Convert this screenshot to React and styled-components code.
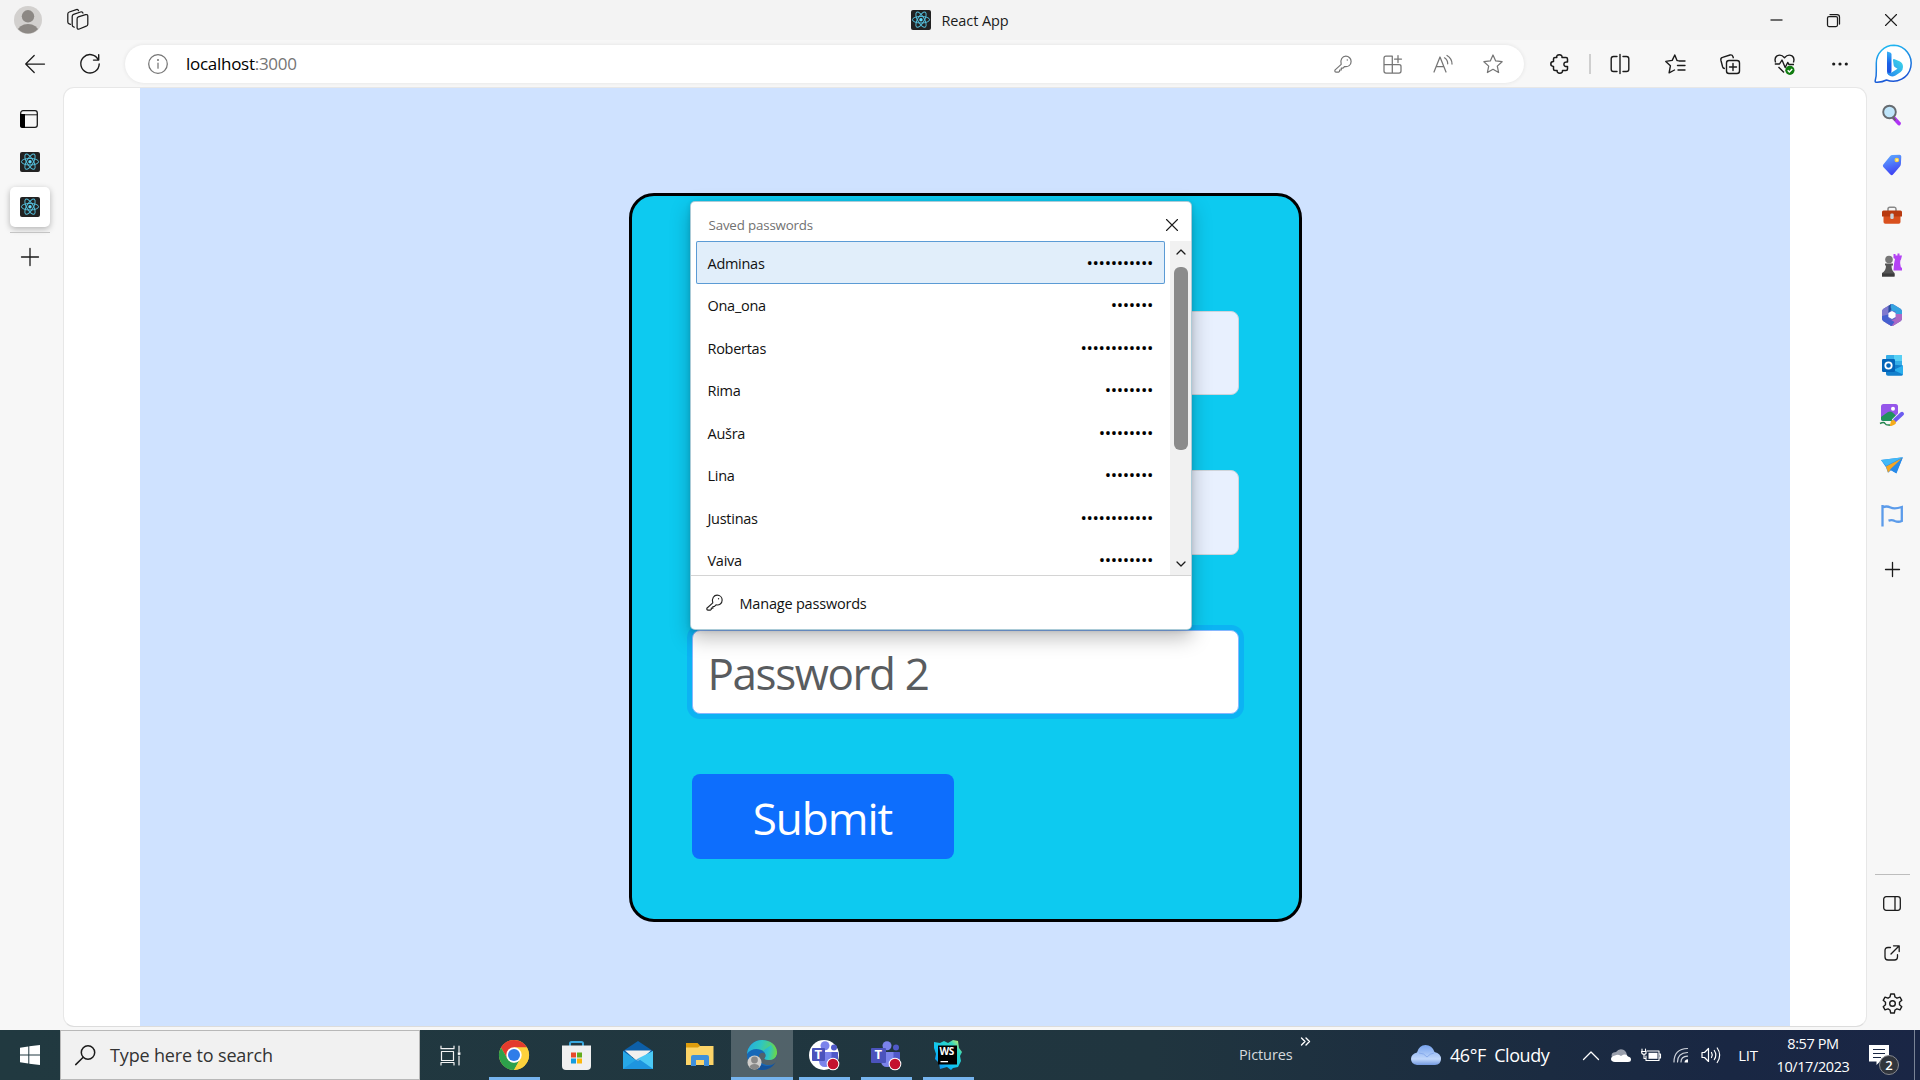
import React from "react";
import styled, { createGlobalStyle } from "styled-components";

const GlobalStyle = createGlobalStyle`
  * { box-sizing: border-box; }
  body { margin: 0; overflow: hidden; font-family: "Open Sans", "Noto Sans", sans-serif; color: #1b1b1b; }
  svg { display: block; flex: none; overflow: visible; }
`;

/* ---------- shared ---------- */
const Screen = styled.div`
  width: 1920px;
  height: 1080px;
  display: flex;
  flex-direction: column;
  background: #f7f7f7;
`;
const Text = styled.span`
  padding-top: ${(p) => (p.$drop === undefined ? 1 : p.$drop)}px;
  font-size: ${(p) => p.$size}px;
  letter-spacing: ${(p) => p.$track || 0}px;
  color: ${(p) => p.$color || "inherit"};
  line-height: 1.2;
  white-space: pre;
`;
const Slot = styled.div`
  flex: none;
  width: ${(p) => p.$w}px;
  height: ${(p) => (p.$h ? p.$h + "px" : "100%")};
  padding-right: ${(p) => p.$pr || 0}px;
  padding-bottom: ${(p) => p.$pb || 0}px;
  display: flex;
  align-items: center;
  justify-content: center;
`;

/* ---------- browser frame ---------- */
const TitleBar = styled.header`
  height: 40px;
  flex: none;
  display: flex;
  align-items: center;
  justify-content: space-between;
  background: #f3f3f3;
`;
const TitleSide = styled.div`
  width: 180px;
  height: 100%;
  display: flex;
  justify-content: ${(p) => (p.$end ? "flex-end" : "flex-start")};
`;
const PageTitle = styled.div`
  display: flex;
  align-items: center;
  gap: 10px;
`;
const Toolbar = styled.nav`
  height: 47px;
  flex: none;
  display: flex;
  align-items: center;
  padding-left: 10px;
`;
const AddressBar = styled.div`
  width: 1399px;
  height: 38px;
  margin: 1px 8px 0 5px;
  flex: none;
  display: flex;
  align-items: center;
  padding: 0 6.5px 0 8px;
  border-radius: 19px;
  background: #fff;
  box-shadow: 0 0 4px rgba(0, 0, 0, 0.09);
`;
const Url = styled.div`
  flex: 1;
  display: flex;
  padding-left: 3px;
`;
const Separator = styled.div`
  width: 2px;
  height: 20px;
  margin: 0 1px 0 2px;
  background: #cfcfcf;
`;
const Body = styled.div`
  flex: 1;
  min-height: 0;
  display: flex;
`;
const TabRail = styled.aside`
  width: 63px;
  flex: none;
  display: flex;
  flex-direction: column;
  padding: 10px 0 0 10px;
`;
const Tab = styled.div`
  width: 40px;
  height: 40px;
  padding-right: ${(p) => p.$pr || 0}px;
  display: flex;
  align-items: center;
  justify-content: center;
  border-radius: 5px;
  margin-top: ${(p) => p.$mt || 0}px;
  background: ${(p) => (p.$active ? "#fff" : "transparent")};
  box-shadow: ${(p) => (p.$active ? "0 2px 6px rgba(0,0,0,.28)" : "none")};
`;
const RailLine = styled.div`
  width: 40px;
  height: 1px;
  margin-top: 5px;
  background: #c4c4c4;
`;
const Viewport = styled.main`
  width: 1804px;
  height: 940px;
  flex: none;
  padding: 0 76px;
  border: 1px solid #e7e7e7;
  border-bottom-color: #dcdcdc;
  border-radius: 11px;
  background: #fff;
`;
const Stage = styled.div`
  width: 1650px;
  height: 938px;
  background: #cfe2ff;
  display: flex;
  justify-content: center;
  align-items: flex-start;
  padding-top: 105px;
`;
const SideRail = styled.aside`
  flex: 1;
  display: flex;
  flex-direction: column;
  align-items: center;
  padding-right: 3px;
`;
const RailRule = styled.div`
  width: 35px;
  height: 1px;
  margin: 276px 0 3px;
  flex: none;
  background: #bdbdbd;
`;

/* ---------- form ---------- */
const Card = styled.div`
  position: relative;
  width: 673px;
  height: 729px;
  padding: 115px 60px 0 60px;
  border: 3px solid #000;
  border-radius: 25px;
  background: #0dcaf0;
  display: flex;
  flex-direction: column;
`;
const Field = styled.div`
  height: ${(p) => p.$h || 84}px;
  flex: none;
  margin-bottom: ${(p) => p.$gap}px;
  padding: 0 15px;
  display: flex;
  align-items: center;
  border-radius: 8px;
  border: 1px solid ${(p) => (p.$focus ? "#86b7fe" : "#ced4da")};
  background: ${(p) => (p.$focus ? "#fff" : "#e8f0fe")};
  box-shadow: ${(p) => (p.$focus ? "0 0 0 5px rgba(13,110,253,.25)" : "none")};
`;
const Submit = styled.div`
  width: 262px;
  height: 85px;
  display: flex;
  align-items: center;
  justify-content: center;
  border-radius: 8px;
  background: #0d6efd;
  color: #fff;
`;

/* ---------- saved password popup ---------- */
const Popup = styled.div`
  position: absolute;
  left: 58px;
  top: 5px;
  width: 502px;
  height: 429px;
  display: flex;
  flex-direction: column;
  border: 1px solid rgba(150, 190, 205, 0.8);
  border-radius: 5px;
  background: #fff;
  box-shadow: 0 8px 20px rgba(0, 0, 0, 0.26), 0 1px 5px rgba(0, 0, 0, 0.12);
`;
const PopupHead = styled.div`
  height: 39px;
  flex: none;
  padding: 7px 13px 0 18px;
  display: flex;
  align-items: center;
  justify-content: space-between;
`;
const PopupBody = styled.div`
  height: 335px;
  flex: none;
  display: flex;
  justify-content: space-between;
  overflow: hidden;
  border-bottom: 1px solid #d4d4d4;
`;
const List = styled.div`
  padding-left: 5px;
`;
const Row = styled.div`
  width: 469px;
  height: 42.5px;
  padding: 0 11.5px 0 12px;
  display: flex;
  align-items: center;
  justify-content: space-between;
  border-radius: 2px;
  background: ${(p) => (p.$on ? "#e1eefa" : "transparent")};
  box-shadow: ${(p) => (p.$on ? "inset 0 0 0 1px #5b9bd5" : "none")};
`;
const ScrollBar = styled.div`
  width: 21px;
  padding-left: 1px;
  display: flex;
  flex-direction: column;
  align-items: center;
  background: #f1f1f1;
`;
const Thumb = styled.div`
  width: 14px;
  height: 183px;
  margin-bottom: 105px;
  flex: none;
  border-radius: 6px;
  background: #8b8b8b;
`;
const Manage = styled.div`
  flex: 1;
  display: flex;
  align-items: center;
  gap: 17px;
  padding: 0 0 0 15px;
`;

/* ---------- taskbar ---------- */
const TaskBar = styled.footer`
  height: 50px;
  flex: none;
  display: flex;
  color: #fff;
  background: linear-gradient(90deg, #213940 0%, #20353f 60%, #1c2d40 76%, #192743 90%, #1a2645 100%);
`;
const SearchBox = styled.div`
  width: 360px;
  display: flex;
  align-items: center;
  gap: 15px;
  padding-left: 14px;
  border: 1px solid #b8b8b8;
  background: #f1f1f1;
  color: #333;
`;
const TaskApp = styled.div`
  width: 62px;
  height: 50px;
  flex: none;
  display: flex;
  flex-direction: column;
  align-items: center;
  padding-top: 10px;
  gap: 7px;
  background: ${(p) => (p.$active ? "rgba(255,255,255,.22)" : "transparent")};
`;
const Indicator = styled.div`
  width: ${(p) => (p.$active ? 62 : 51)}px;
  height: 3px;
  background: ${(p) => (p.$show ? "#76b4ee" : "transparent")};
`;
const Pictures = styled.div`
  margin-left: auto;
  width: 80px;
  display: flex;
  gap: 8px;
  padding-top: 15px;
`;
const Weather = styled.div`
  width: 152px;
  margin: 0 14px 0 92px;
  display: flex;
  align-items: center;
  gap: 9px;
`;
const Language = styled.div`
  width: 46px;
  margin-right: 3px;
  display: flex;
  align-items: center;
  justify-content: center;
`;
const Clock = styled.div`
  width: 78px;
  display: flex;
  flex-direction: column;
  align-items: center;
  justify-content: center;
  gap: 5px;
`;
const ShowDesktop = styled.div`
  width: 6px;
  border-left: 1px solid #7a8496;
`;

/* ---------- line icons ---------- */
const Line = ({ w = 20, h, c = "#1b1b1b", s = 1.25, children }) => (
  <svg width={w} height={h || w} viewBox={`0 0 ${w} ${h || w}`} fill="none" stroke={c} strokeWidth={s} strokeLinecap="round" strokeLinejoin="round">
    {children}
  </svg>
);
const GREY = "#757575";

const ReactLogo = () => (
  <svg width="20" height="20" viewBox="0 0 20 20">
    <rect width="20" height="20" rx="2" fill="#222" />
    <g fill="none" stroke="#53bcd8" strokeWidth="1">
      <ellipse cx="10" cy="9.7" rx="8.6" ry="3.3" />
      <ellipse cx="10" cy="9.7" rx="8.6" ry="3.3" transform="rotate(60 10 9.7)" />
      <ellipse cx="10" cy="9.7" rx="8.6" ry="3.3" transform="rotate(120 10 9.7)" />
    </g>
    <circle cx="10" cy="9.7" r="1.7" fill="#61dafb" />
  </svg>
);
const Profile = () => (
  <svg width="28" height="28" viewBox="0 0 28 28">
    <clipPath id="pf"><circle cx="14" cy="14" r="13.5" /></clipPath>
    <circle cx="14" cy="14" r="14" fill="#d2d0ce" />
    <g fill="#8c8884" clipPath="url(#pf)"><circle cx="14" cy="10.3" r="6.2" /><ellipse cx="14" cy="25.5" rx="10.5" ry="7.5" /></g>
  </svg>
);
const Workspaces = () => (
  <Line w={22}>
    <path d="M11.300 7.900l7.300-2.300q2.200-.5 2.200 1.600v8q0 1.500-1.500 2l-7 2.800q-2.200.7-2.200-1.600V9.900q0-1.500 1.200-2z" />
    <path d="M7.300 18.200l-.8-.4q-1.300-.5-1.300-1.900V7.400q0-1.500 1.400-2L13.500 3q2-.5 2.400 1.200" />
    <path d="M3.400 15.400l-1.200-.6Q.8 14.300.8 12.900V5q0-1.500 1.500-2L9.300.6q1.700-.5 2.200 1.100" />
  </Line>
);
const Back = () => <Line><path d="M19.500 10H.7M9.200 1.500L.7 10l8.500 8.500" /></Line>;
const Refresh = () => <Line s={1.4}><path d="M18.300 5.800A9.200 9.200 0 1 0 19.200 10M18.700.8v5.300h-5.200" /></Line>;
const Info = () => (
  <Line c={GREY}><circle cx="10" cy="10" r="9.300" /><path d="M10 9v5.200" /><circle cx="10" cy="6" r=".4" fill={GREY} /></Line>
);
const Key = ({ c = GREY, w = 18 }) => (
  <svg width={w} height={w} viewBox="0 0 18 18" fill="none" stroke={c} strokeWidth="1.200" strokeLinejoin="round">
    <path d="M7.200 9.400C5.800 4.500 8.500 1.200 11.800 1.200c3 0 5.300 2.300 5.300 5.200 0 3.800-3 5.800-6.500 5.100L9 13.200H7.300v1.800H5.600v1.300l-.9.800H2q-1.100 0-1.100-1.100v-.9z" />
    <circle cx="13.300" cy="5" r=".7" fill={c} stroke="none" />
  </svg>
);
const AppsPlus = () => (
  <Line w={19} c={GREY}><path d="M9.300 1.200H3q-2 0-2 2V16q0 2 2 2h13q2 0 2-2v-4.500q0-1.800-2-1.800H1M9.300 1.200V18M15 .5v7M11.500 4h7" /></Line>
);
const ReadAloud = () => (
  <Line c={GREY} h={18}><path d="M1 17L7 2l6 15M3.300 11.500h7.500M11.500 2.800q3.200 2 3.200 6M14 .5q5 3 5 8.500" /></Line>
);
const Star = () => (
  <Line c={GREY}><path d="M10 1l2.700 5.900 6.400.8-4.800 4.400 1.300 6.400L10 15.300l-5.600 3.200 1.300-6.400L.9 7.700l6.400-.8z" /></Line>
);
const Puzzle = () => (
  <Line s={1.500}><path d="M6.800 3.500q-.6-2.700 2.500-2.700t2.700 2.700h4q1.500 0 1.500 1.500v3q-3.600-.4-3.600 2.200t3.600 2.200V15q0 1.500-1.500 1.500h-3.500q.2 2.800-2.700 2.800t-2.700-2.800H5q-1.500 0-1.500-1.500v-2.600Q.8 12.400.8 9.900t2.700-2.500V5q0-1.500 1.500-1.500z" /></Line>
);
const Split = () => <Line s={1.400}><path d="M7 2.500H3.500Q1.200 2.500 1.200 4.800v10.400q0 2.300 2.300 2.300H7M13 2.500h3.500q2.300 0 2.300 2.300v10.400q0 2.300-2.300 2.300H13M10 .5v19" /></Line>;
const Favorites = () => (
  <Line s={1.400}><path d="M13 6.600L12 6.500 9.800 1 7.200 6.400.8 7.400l4.600 4.400-1.300 7L9.500 16M14 7h6M12.500 11.500H20M13 16h7" /></Line>
);
const Collections = () => (
  <Line s={1.400}><rect x="6.500" y="6.500" width="13" height="13" rx="2.500" /><path d="M13 9.500v7M9.500 13h7M4.300 14.500Q3 14 2.600 12.700L.9 6.200Q.4 4 2.500 3.400L10 1q2.300-.5 3 1.700l.3 1" /></Line>
);
const Health = () => (
  <svg width="21" height="20" viewBox="0 0 21 20" fill="none" stroke="#1b1b1b" strokeWidth="1.400" strokeLinejoin="round">
    <path d="M1.600 8.500Q0 4 3 1.900 7-.3 10.500 3.700 14-.3 18 1.900q3 2.100 1.400 6.600M.8 10h4.700L8 6l3.200 7.500 2.500-5L15 10.500h5M4.500 13l5.500 5.500" />
    <circle cx="15.900" cy="16.300" r="4.600" fill="#107c10" stroke="none" /><path d="M13.700 16.300l1.700 1.700 2.800-3" stroke="#fff" />
  </svg>
);
const Dots = () => <svg width="16" height="4" viewBox="0 0 16 4" fill="#1b1b1b"><circle cx="1.700" cy="2" r="1.600" /><circle cx="8" cy="2" r="1.600" /><circle cx="14.300" cy="2" r="1.600" /></svg>;
const Bing = () => (
  <svg width="39" height="39" viewBox="0 0 39 39">
    <defs>
      <linearGradient id="bo" x1="0" y1="0" x2=".3" y2="1"><stop stopColor="#20c3f4" /><stop offset="1" stopColor="#1a56d6" /></linearGradient>
      <linearGradient id="bs" x1="0" y1="0" x2="0" y2="1"><stop stopColor="#38b5f7" /><stop offset=".5" stopColor="#1a62e8" /><stop offset="1" stopColor="#1f4fdc" /></linearGradient>
      <linearGradient id="bb" x1="1" y1="0" x2="0" y2="1"><stop stopColor="#3fdbe8" /><stop offset="1" stopColor="#2484f0" /></linearGradient>
    </defs>
    <path d="M20 1.300A18 18 0 1 1 12.500 36Q8 38.500 2 38.200 1 38.200 1.200 36.800 2.500 32 2.300 27V19A17.700 17.700 0 0 1 20 1.300z" fill="#fff" stroke="url(#bo)" strokeWidth="1.500" />
    <path d="M13 7.500l3.200 1.100q1.300.5 1.300 2v16.500l-1 3.800q-3.500-.5-3.500-4z" fill="url(#bs)" />
    <path d="M20 15l5.500 2.300q3.500 1.700 3.500 5.700 0 3-2.300 5l-5.200 3.500q-4 2-7-.5-1.500-1.500-1.500-3 2 2 5 .3l5.500-3.500-2-1.300q-1.300-.7-1.800-2L19 16.500q-.4-1.600 1-1.500z" fill="url(#bb)" />
  </svg>
);
const TabPane = () => (
  <svg width="18" height="18" viewBox="0 0 18 18"><rect x=".7" y=".7" width="16.600" height="16.600" rx="2.300" fill="none" stroke="#1b1b1b" strokeWidth="1.300" /><path d="M1 4.800h16.500" stroke="#1b1b1b" /><path d="M0 4h5v14H2.500Q0 18 0 15.500z" /></svg>
);
const Plus = ({ w = 18 }) => <Line w={w} s={1.300}><path d={`M${w / 2} .5V${w - 0.5}M.5 ${w / 2}H${w - 0.5}`} /></Line>;
const Close = ({ w = 11 }) => <Line w={w} s={1.100}><path d={`M.5 .5L${w - 0.5} ${w - 0.5}M${w - 0.5} .5L.5 ${w - 0.5}`} /></Line>;
const Min = () => <Line w={13} h={1}><path d="M.5 0h12" strokeLinecap="butt" /></Line>;
const Restore = () => <Line w={13}><rect x=".5" y="2.500" width="10" height="10" rx="1.500" /><path d="M3 .5h7q2.500 0 2.500 2.500v7" /></Line>;

/* ---------- sidebar colour icons ---------- */
const SearchColor = () => (
  <svg width="20" height="22" viewBox="0 0 20 22"><path d="M12 14l5 5.500" stroke="#b033f5" strokeWidth="3.800" strokeLinecap="round" /><path d="M10.500 13l3 3.300" stroke="#666" strokeWidth="2" /><circle cx="7.500" cy="8" r="6.300" fill="#bfe5fa" stroke="#666b70" strokeWidth="1.900" /></svg>
);
const TagColor = () => (
  <svg width="20" height="22" viewBox="0 0 20 22"><defs><linearGradient id="tg" x1=".3" y1="0" x2=".6" y2="1"><stop stopColor="#5ea9ff" /><stop offset="1" stopColor="#3d3cf3" /></linearGradient></defs><path d="M10.500 1l7-.3q1.700 0 1.800 1.700l-.4 7.600q-.1 1.500-1.200 2.700l-6.700 7.800q-1.300 1.300-2.600 0L1.300 13q-1-1.300 0-2.600l6.500-8Q9 1 10.500 1z" fill="url(#tg)" /><circle cx="14.800" cy="6" r="2.300" fill="#f7d54a" /><circle cx="15" cy="6" r="1" fill="#fff3b0" /></svg>
);
const ToolboxColor = () => (
  <svg width="20" height="18" viewBox="0 0 20 18"><path d="M6 5V3q0-1.800 1.800-1.800h4.600Q14 1.200 14 3v2" fill="none" stroke="#888" strokeWidth="1.500" /><path d="M1.500 9h17v7q0 1.800-1.800 1.800H3.300q-1.800 0-1.800-1.800z" fill="#d9501e" /><path d="M0 6q0-1.500 1.500-1.500h17Q20 4.500 20 6v4.500H0z" fill="#b83a10" /><rect x="8.300" y="7.500" width="3.400" height="5.500" rx="1.200" fill="#c9d4dc" /></svg>
);
const ChessColor = () => (
  <svg width="20" height="24" viewBox="0 0 20 24"><path d="M11.500 1h2v1.500h2V.5h2V2.500H20l-1 4q-1 .5-.8 4l.6 3.500 1.200 1v2.500h-8.500L12 11l1-5-1.500-1z" fill="#b443f4" /><circle cx="7" cy="6.500" r="3.800" fill="#777" /><path d="M3 10.500h8v2H9.500q0 5 3 7.500v3.500H0V20q4-2 4-7.500H3z" fill="#555" /><path d="M0 20.500h12.500v3H0z" fill="#3b3b3b" /></svg>
);
const M365 = () => (
  <svg width="22" height="24" viewBox="0 0 22 24">
    <path d="M9.500 1.500q1.500-1 3 0l7 4.200q1.500 1 1.500 2.700v7.200q0 1.700-1.500 2.700l-7 4.200q-1.500 1-3 0l-7-4.200Q1 17.300 1 15.600V8.400q0-1.700 1.500-2.700z" fill="#6067c8" />
    <path d="M10.500 1L2.500 5.700Q1 6.700 1 8.400v7.200l6.500-1V9z" fill="#7f79cf" />
    <path d="M9.500 1.500q1.500-1 3 0l7 4.200q1.500 1 1.500 2.700v6L14.500 11V8.500L7.500 7q0-3.500 2-5.500z" fill="#35a3e0" />
    <path d="M7.500 7V3L10 1.300q-1 2.500.5 5L7.500 10z" fill="#2a4b9c" />
    <path d="M21 11v4.600q0 1.700-1.500 2.700l-7 4.200q-1.500 1-3 0L5 20l9.500-4.500V11z" fill="#ab69c6" />
    <path d="M1 13l6.500-1.500v4l6 3.500-3 4q-.5 0-1-.5l-7-4.200Q1 17.300 1 15.600z" fill="#4560cf" />
    <path d="M11 8l3.600 2v4L11 16l-3.600-2v-4z" fill="#fff" />
  </svg>
);
const OutlookIcon = () => (
  <svg width="21" height="21" viewBox="0 0 21 21"><rect x="4" y="0" width="16" height="12" rx="1" fill="#35aee8" /><path d="M12 0h8v6h-8z" fill="#57d0f5" /><path d="M4 9l17 1.500V19q0 1.700-1.500 1.700H6Q4 20.700 4 19z" fill="#1380cd" /><path d="M21 10.500v9L11.500 15z" fill="#2bb0ee" /><rect x="0" y="4" width="13" height="13" rx="1.200" fill="#0364b8" /><circle cx="6.500" cy="10.500" r="3.200" fill="none" stroke="#fff" strokeWidth="1.800" /></svg>
);
const DesignerIcon = () => (
  <svg width="24" height="24" viewBox="0 0 24 24"><rect x="1" y="1" width="17" height="17" rx="2.500" fill="#9556ea" /><circle cx="13" cy="5.700" r="2" fill="#fff" /><path d="M1 14l7-5q2-1 4 0l5 4.500-3 4.500H3q-2 0-2-2z" fill="#20935c" /><path d="M22 10.500l-8 8" stroke="#f7f7f7" strokeWidth="6" /><path d="M22 10.800l-7 6.500" stroke="#6c5cf0" strokeWidth="4" strokeLinecap="round" /><path d="M11 18q2.500-2 4.500.5T12 22.700q-1.500.5-3 0 1.500-1 2-4.700z" fill="#f5ad1d" /><path d="M0 20.500q4-2 5 0t5 1.500" fill="none" stroke="#23844f" strokeWidth="1.500" /></svg>
);
const PlaneIcon = () => (
  <svg width="22" height="17" viewBox="0 0 22 17"><path d="M0 3L22 .3 15 16l-5-2.800-3 2.500-2-5.500z" fill="#2788e8" /><path d="M0 3L22 .3 5 9z" fill="#43b9f7" /><path d="M5 9.500L21 1.300 7 15.500z" fill="#f5a623" /><path d="M21.500 1L9 12.500l6.500 4z" fill="#278ae9" /></svg>
);
const FlagIcon = () => (
  <svg width="22" height="23" viewBox="0 0 22 23" fill="none" stroke="#5b9bea" strokeWidth="2.300"><path d="M1.500 1v21.500M1.500 3.500q4-2 8 0t11.300-.5v14q-3.500 1.500-7 0-3-1.500-6.300-.3" /></svg>
);
const PanelIcon = () => <Line w={18} h={15} s={1.300}><rect x=".7" y=".7" width="16.600" height="13.600" rx="2.500" /><path d="M12 1v13" /></Line>;
const OpenOut = () => <Line w={16} s={1.300}><path d="M6.500 2.500H4Q1 2.500 1 5.500V12q0 3 3 3h6.500q3 0 3-3v-2.300M9.500.8h5.700v5.700M15 1L7 9" /></Line>;
const Gear = () => (
  <Line w={21} s={1.400}>
    <path d="M8.700 1h3.600l.7 3 2 1.200 3-1 1.800 3.100-2.300 2v2.400l2.300 2-1.800 3.100-3-1-2 1.200-.7 3H8.700L8 17l-2-1.200-3 1-1.800-3.100 2.300-2V9.300l-2.300-2L3 4.200l3 1L8 4z" />
    <circle cx="10.500" cy="10.500" r="2.800" />
  </Line>
);

/* ---------- taskbar icons ---------- */
const WindowsLogo = () => <svg width="20" height="20" viewBox="0 0 20 20" fill="#fff"><path d="M0 2.700l8.300-1.200V9.500H0zM9.300 1.300L20 0v9.500H9.300zM0 10.500h8.300v8L0 17.300zM9.300 10.500H20V20L9.300 18.700z" /></svg>;
const SearchGlass = () => <Line c="#1b1b1b" s={1.500}><circle cx="13" cy="7.500" r="6.700" /><path d="M8.200 12.300L.7 19.600" /></Line>;
const TaskViewIcon = () => <Line w={21} h={19} c="#f3f3f3" s={1.200}><rect x="1.500" y="5.500" width="12" height="9" /><path d="M1 0v2.700h13V0M1 19v-2.500h13V19M19 0v5.500M19 10v9" /><path d="M17.800 6.300h2.600v2.600h-2.600z" fill="#fff" stroke="none" /></Line>;
const Chrome = () => (
  <svg width="30" height="30" viewBox="0 0 30 30"><circle cx="15" cy="15" r="15" fill="#fdd23c" /><path d="M2 7.500A15 15 0 0 1 28 7.500H15L8.500 18.800z" fill="#e33b2e" /><path d="M2 7.500l6.500 11.300Q11 22.500 15 22.500l5-1.500-5 9A15 15 0 0 1 2 7.500z" fill="#2da14b" /><path d="M28 7.500H15l6.500 11.300L15 30A15 15 0 0 0 28 7.500z" fill="#fdd23c" /><circle cx="15" cy="15" r="7.700" fill="#fff" /><circle cx="15" cy="15" r="6" fill="#2f7de9" /></svg>
);
const Store = () => (
  <svg width="29" height="30" viewBox="0 0 29 30"><path d="M8 7V3.500q0-1.500 1.500-1.500h10Q21 2 21 3.500V7" fill="none" stroke="#39a8df" strokeWidth="2" /><path d="M0 5.500h29V26q0 4-4 4H4q-4 0-4-4z" fill="#f0f0f0" /><path d="M9 12.500h5v5H9z" fill="#e8492b" /><path d="M15 12.500h5v5h-5z" fill="#63ac1d" /><path d="M9 18.500h5v5H9z" fill="#149cdf" /><path d="M15 18.500h5v5h-5z" fill="#fbb70c" /></svg>
);
const Mail = () => (
  <svg width="30" height="28" viewBox="0 0 30 28"><path d="M0 10L15 0l15 10v6H0z" fill="#0d5fa8" /><path d="M2 9.500h26L15 21z" fill="#f3f1ef" /><path d="M0 10l15 10.500L30 10v18H0z" fill="#27a7e6" /><path d="M30 10v18L15 17.500z" fill="#4bc9f5" /><path d="M0 28l15-10.500L30 28z" fill="#1b8ddb" opacity=".7" /></svg>
);
const Folder = () => (
  <svg width="28" height="24" viewBox="0 0 28 24"><path d="M0 0h11.500l2.500 2.500V8H0z" fill="#dd9c0d" /><path d="M0 4.500h12L14 3h13.500v19H0z" fill="#fcd468" /><path d="M5 23v-9q0-2 2-2h14q2 0 2 2v9h-5v-6h-8v6z" fill="#3f90dc" /></svg>
);
const Edge = () => (
  <svg width="30" height="30" viewBox="0 0 30 30">
    <defs><linearGradient id="eg" x1="0" y1="0" x2="1" y2=".2"><stop stopColor="#24a9e3" /><stop offset=".5" stopColor="#2fc6c0" /><stop offset="1" stopColor="#69d64b" /></linearGradient></defs>
    <circle cx="15" cy="15" r="15" fill="#1668b8" /><path d="M0 14A15 15 0 0 1 15 0c8.500 0 15 5.500 15 12 0 5-3.500 8-8 8q-4.500 0-4.500-1.700C19 17 19 16 18.500 14 17 9 5 6 0 14z" fill="url(#eg)" /><path d="M30 14q-1 6-8 6-4.500 0-4.500-1.700Q19 17 18.500 14q-4-3-6.500 1-1 9 8 10 5 .5 8.500-1.500 1.700-3 1.500-9.500z" fill="#52626a" /><path d="M30 12c0 5-3.500 8-8 8q-4.500 0-4.500-1.700C19 17 19 16 18.500 14q-.5-2-2-3.500L24 5z" fill="url(#eg)" /><path d="M11 17q0 8 8 9 5 .7 9.500-3.500Q24 30 15 30 5 29 4 22q3-6 7-5z" fill="#15539b" />
    <circle cx="7.500" cy="22.500" r="7" fill="#d0cecb" /><circle cx="7.500" cy="20" r="3.400" fill="#888" /><path d="M2.500 27q1-3 5-3t5 3q-5 5-10 0z" fill="#888" />
  </svg>
);
const TeamsLetter = styled.span`
  position: absolute;
  left: ${(p) => p.$x}px;
  top: 6px;
  color: #fff;
  font: 700 13px/16px "Open Sans", sans-serif;
`;
const Badged = styled.div`
  position: relative;
  width: 30px;
  height: 30px;
`;
const Teams = ({ round }) => (
  <Badged>
    <svg width="30" height="30" viewBox="0 0 30 30">
      {round && <circle cx="15" cy="15" r="15" fill="#fff" />}
      <circle cx="16" cy="5.800" r="4.500" fill="#7b83eb" /><circle cx="25" cy="7.500" r="3" fill="#5059c9" /><path d="M20 12h8.500q.5 0 .5 1v7q-1 4-6 4z" fill="#5059c9" /><path d="M10 12h12.500v9q-1 6-6.500 6t-6-6z" fill="#7b83eb" />
      <rect x={round ? 3 : 0} y="8" width={round ? 13 : 15} height={round ? 13 : 15} rx="1" fill="#4b53bc" />
      <circle cx="24" cy="24" r="6.300" fill="#fff" /><circle cx="24" cy="24" r="5.300" fill="#c4122f" />
    </svg>
    <TeamsLetter $x={round ? 5.500 : 3.500}>T</TeamsLetter>
  </Badged>
);
const WsText = styled.span`
  position: absolute;
  left: 6.5px;
  top: 4px;
  color: #fff;
  font: 700 10px/14px "Open Sans", sans-serif;
  letter-spacing: -0.3px;
`;
const WebStorm = () => (
  <Badged>
    <svg width="30" height="30" viewBox="0 0 30 30">
      <defs><linearGradient id="wg" x1="1" y1="0" x2="0" y2="1"><stop stopColor="#fcf84a" /><stop offset=".25" stopColor="#30d6c0" /><stop offset=".6" stopColor="#0fc3f3" /><stop offset="1" stopColor="#0c7df0" /></linearGradient></defs>
      <path d="M1 2l6 1 4-2 4 2 5-3 5 1 1 7 3 4-2 4 1 5-3 6-5 1-2 2-4-3-7 2-1-6-4-4 1-5-2-6z" fill="url(#wg)" /><rect x="5" y="5.500" width="19" height="19" /><path d="M7.500 21h7.500v1.300H7.500z" fill="#fff" />
    </svg>
    <WsText>WS</WsText>
  </Badged>
);
const WeatherCloud = () => (
  <svg width="30" height="20" viewBox="0 0 30 20"><defs><linearGradient id="wc" x1="0" y1="0" x2="0" y2="1"><stop stopColor="#77a3ee" /><stop offset=".7" stopColor="#c0d7fb" /><stop offset="1" stopColor="#7298df" /></linearGradient></defs><path d="M6 20q-6-1-6-6t6-6.500Q8 0 14.500 0 21 0 23.500 7 30 8.500 30 14t-6 6z" fill="url(#wc)" /><path d="M8 8q5 0 8 4 3-3.500 7-4" stroke="#7fa4e8" fill="none" opacity=".8" /></svg>
);
const Chevron = () => <Line w={16} h={9} c="#fff" s={1.300}><path d="M.5 8.500L8 1l7.500 7.500" /></Line>;
const OneDrive = () => <svg width="20" height="13" viewBox="0 0 20 13"><path d="M1 9Q-1 3 5 3q3-4 8-2 3 2 3 5l-9 4z" fill="#999fac" /><path d="M4 13q-4-.5-4-3t4-3.500q3-1.500 6 .5 5-3 7 .5 3 .5 3 3t-3 2.500z" fill="#fff" /></svg>;
const Battery = () => <Line w={20} h={14} c="#fff" s={1.100}><path d="M6 3h12v9.500H5V8M18.500 6h1v4h-1M1 1v2.500M4.500 1v2.500M.5 3.500h4.500v2q-2 2-4 0zM3 6v4.500h2" /><path d="M7.500 4.800h9v6h-9z" fill="#fff" stroke="none" /></Line>;
const Wifi = () => <Line w={16} h={16} c="#cfd4dc" s={1.200}><path d="M1 15Q1 2 14.500 1.500M4.500 15Q4.500 6 14.500 5.500M8 15q0-5.500 6.500-5.800" /><path d="M11.500 15.500q0-3 3.500-3.300V15.500z" fill="#fff" stroke="none" /></Line>;
const Speaker = () => <Line w={20} h={18} c="#fff" s={1.200}><path d="M1 6.500h2.500l4-4v13l-4-4H1zM10.500 6.500q1.500 2.500 0 5M13.300 4.500q3 4.500 0 9M16.200 2q5 7 0 14.500" /></Line>;
const BadgeCount = styled.span`
  position: absolute;
  left: 10px;
  top: 9.5px;
  width: 20px;
  height: 20px;
  border: 1px solid #87898e;
  border-radius: 50%;
  background: #31353c;
  font-size: 13px;
  font-weight: 600;
  line-height: 18px;
  text-align: center;
`;
const Notice = () => (
  <Badged>
    <svg width="20" height="20" viewBox="0 0 20 20"><path d="M0 0h20v16.500h-9L7.500 20v-3.500H0z" fill="#fff" /><path d="M4 4.500h12M4 8.500h12M4 12.500h8" stroke="#1a2743" strokeWidth="1.100" /></svg>
    <BadgeCount>2</BadgeCount>
  </Badged>
);
const NoticeSlot = styled.div`
  width: 62px;
  padding: 15px 0 0 17px;
`;

const accounts = [
  ["Adminas", 11], ["Ona_ona", 7], ["Robertas", 12], ["Rima", 8],
  ["Aušra", 9], ["Lina", 8], ["Justinas", 12], ["Vaiva", 9],
];
const railApps = [SearchColor, TagColor, ToolboxColor, ChessColor, M365, OutlookIcon, DesignerIcon, PlaneIcon, FlagIcon];
const taskApps = [
  { icon: <Chrome />, open: true }, { icon: <Store /> }, { icon: <Mail /> }, { icon: <Folder /> },
  { icon: <Edge />, open: true, active: true }, { icon: <Teams round />, open: true },
  { icon: <Teams />, open: true }, { icon: <WebStorm />, open: true },
];

const PasswordPopup = () => (
  <Popup>
    <PopupHead>
      <Text $size={13.3} $track={-0.15} $drop={2} $color="#717171">Saved passwords</Text>
      <Close w={12} />
    </PopupHead>
    <PopupBody>
      <List>
        {accounts.map(([name, count], i) => (
          <Row key={name} $on={i === 0}>
            <Text $size={14.5} $track={-0.28} $drop={2} $color="#111">{name}</Text>
            <Text $size={17} $track={-0.35} $drop={1} $color="#000">{"•".repeat(count)}</Text>
          </Row>
        ))}
      </List>
      <ScrollBar>
        <Slot $w={20} $h={26} $pb={4}><Line w={8} h={4}><path d="M0 4l4-4 4 4" /></Line></Slot>
        <Thumb />
        <Slot $w={20} $h={17}><Line w={8} h={4}><path d="M0 0l4 4 4-4" /></Line></Slot>
      </ScrollBar>
    </PopupBody>
    <Manage>
      <Key c="#222" w={17} />
      <Text $size={14.5} $track={-0.2} $drop={2} $color="#111">Manage passwords</Text>
    </Manage>
  </Popup>
);

export default function App() {
  return (
    <Screen>
      <GlobalStyle />
      <TitleBar>
        <TitleSide>
          <Slot $w={56}><Profile /></Slot>
          <Slot $w={43}><Workspaces /></Slot>
        </TitleSide>
        <PageTitle><ReactLogo /><Text $size={14.5} $track={-0.1} $drop={2}>React App</Text></PageTitle>
        <TitleSide $end>
          <Slot $w={57} $pr={2}><Min /></Slot>
          <Slot $w={57} $pr={2}><Restore /></Slot>
          <Slot $w={57}><Close w={12} /></Slot>
        </TitleSide>
      </TitleBar>
      <Toolbar>
        <Slot $w={50}><Back /></Slot>
        <Slot $w={60}><Refresh /></Slot>
        <AddressBar>
          <Slot $w={50}><Info /></Slot>
          <Url>
            <Text $size={17} $track={-0.28} $drop={0} $color="#000">localhost</Text>
            <Text $size={17} $track={-0.28} $drop={0} $color={GREY}>:3000</Text>
          </Url>
          <Slot $w={50}><Key /></Slot>
          <Slot $w={50}><AppsPlus /></Slot>
          <Slot $w={50}><ReadAloud /></Slot>
          <Slot $w={50}><Star /></Slot>
        </AddressBar>
        <Slot $w={55}><Puzzle /></Slot>
        <Separator />
        <Slot $w={55}><Split /></Slot>
        <Slot $w={55}><Favorites /></Slot>
        <Slot $w={55}><Collections /></Slot>
        <Slot $w={55}><Health /></Slot>
        <Slot $w={55}><Dots /></Slot>
        <Slot $w={52}><Bing /></Slot>
      </Toolbar>
      <Body>
        <TabRail>
          <Tab $mt={2} $pr={2}><TabPane /></Tab>
          <Tab $mt={3}><ReactLogo /></Tab>
          <Tab $mt={5} $active><ReactLogo /></Tab>
          <RailLine />
          <Tab $mt={4} $pr={1}><Plus /></Tab>
        </TabRail>
        <Viewport>
          <Stage>
            <Card>
              <Field $gap={75} />
              <Field $h={85} $gap={75} />
              <Field $focus $gap={60}><Text $size={44} $track={-1.4} $drop={2} $color="#595c5f">Password 2</Text></Field>
              <Submit><Text $size={44} $track={-1} $drop={4}>Submit</Text></Submit>
              <PasswordPopup />
            </Card>
          </Stage>
        </Viewport>
        <SideRail>
          <Slot $w={49} $h={3} />
          {railApps.map((Icon, i) => <Slot key={i} $w={49} $h={50}><Icon /></Slot>)}
          <Slot $w={49} $h={58}><Plus w={15} /></Slot>
          <RailRule />
          <Slot $w={49} $h={50}><PanelIcon /></Slot>
          <Slot $w={49} $h={50}><OpenOut /></Slot>
          <Slot $w={49} $h={50}><Gear /></Slot>
        </SideRail>
      </Body>
      <TaskBar>
        <Slot $w={60}><WindowsLogo /></Slot>
        <SearchBox><SearchGlass /><Text $size={18} $track={-0.15}>Type here to search</Text></SearchBox>
        <Slot $w={63} $pr={3}><TaskViewIcon /></Slot>
        {taskApps.map((a, i) => (
          <TaskApp key={i} $active={a.active}>
            <Slot $w={30} $h={30}>{a.icon}</Slot>
            <Indicator $show={a.open} $active={a.active} />
          </TaskApp>
        ))}
        <Pictures>
          <Text $size={14.5} $track={-0.1} $color="#d6dade">Pictures</Text>
          <Line w={9} h={8} c="#fff" s={1.4}><path d="M.5-7l3.500 3.500L.5 0M5-7l3.500 3.500L5 0" /></Line>
        </Pictures>
        <Weather><WeatherCloud /><Text $size={18} $track={-0.45} $drop={2}>46°F  Cloudy</Text></Weather>
        <Slot $w={28}><Chevron /></Slot>
        <Slot $w={32}><OneDrive /></Slot>
        <Slot $w={28}><Battery /></Slot>
        <Slot $w={32}><Wifi /></Slot>
        <Slot $w={28}><Speaker /></Slot>
        <Language><Text $size={15} $track={-0.3} $drop={0}>LIT</Text></Language>
        <Clock><Text $size={14.5} $track={-0.4} $drop={0}>8:57 PM</Text><Text $size={14.5} $track={-0.4} $drop={0}>10/17/2023</Text></Clock>
        <NoticeSlot><Notice /></NoticeSlot>
        <ShowDesktop />
      </TaskBar>
    </Screen>
  );
}
